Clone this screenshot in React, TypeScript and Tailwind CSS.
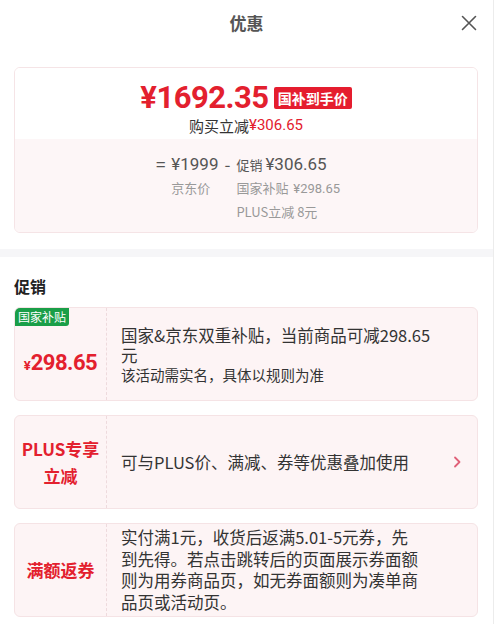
import React from "react";

const CJK = '"Noto Sans CJK SC", "Noto Sans", sans-serif';
const NUM = 'Roboto, "Noto Sans CJK SC", sans-serif';

function Card({ left, children, chevron }: { left: React.ReactNode; children: React.ReactNode; chevron?: boolean }) {
  return (
    <div className="relative flex h-[94px] rounded-[6px] border border-[#f5e3e5] bg-[#fdf4f5] overflow-hidden">
      <div className="relative flex w-[92px] shrink-0 items-center justify-center border-r border-dashed border-[#eedadd]">
        {left}
      </div>
      <div className="flex flex-1 items-center pl-[14px]">{children}</div>
      {chevron && (
        <div className="flex w-[40px] items-center justify-center">
          <svg width="10" height="14" viewBox="0 0 10 14">
            <path d="M3 2.5 L7.5 7 L3 11.5" fill="none" stroke="#e06078" strokeWidth="1.8" strokeLinecap="round" strokeLinejoin="round" />
          </svg>
        </div>
      )}
    </div>
  );
}

export default function App() {
  return (
    <div className="h-[624px] w-[500px] overflow-hidden bg-white" style={{ fontFamily: CJK }}>
      <div className="h-full w-[494px] border-r border-[#ececec]">
        {/* header */}
        <div className="grid h-[46px] grid-cols-[48px_1fr_48px] items-center">
          <div />
          <div className="text-center text-[17px] font-bold text-[#555]">优惠</div>
          <div className="flex items-center justify-center">
            <svg width="16" height="16" viewBox="0 0 16 16">
              <path d="M1.5 1.5 L14.5 14.5 M14.5 1.5 L1.5 14.5" stroke="#555" strokeWidth="1.6" strokeLinecap="round" />
            </svg>
          </div>
        </div>

        {/* top card */}
        <div className="mx-[14px] mt-[21px] w-[464px] overflow-hidden rounded-[6px] border border-[#f5e4e6]">
          <div className="flex flex-col items-center bg-white pt-[11px] pb-[3px]">
            <div className="flex h-[36px] items-center">
              <span className="text-[31px] font-bold leading-none tracking-[-0.5px] text-[#e3202e]" style={{ fontFamily: NUM }}>
                ¥1692.35
              </span>
              <span className="ml-[5px] mt-[2px] rounded-[2px] bg-[#e51d2e] px-[4px] text-[14px] font-bold leading-[22px] text-white">
                国补到手价
              </span>
            </div>
            <div className="flex h-[21px] items-center text-[15px] leading-[21px]">
              <span className="text-[#333]">购买立减</span>
              <span className="text-[#e3202e]" style={{ fontFamily: NUM }}>¥306.65</span>
            </div>
          </div>
          <div className="flex justify-center bg-[#fdf6f7] pt-[13px] pb-[8px] pl-[4px] text-[#555]">
            <span className="text-[17px] leading-[24px]">=</span>
            <div className="ml-[6px] flex flex-col">
              <span className="h-[24px] text-[17px] leading-[24px]" style={{ fontFamily: NUM }}>¥1999</span>
              <span className="h-[24px] text-[13px] leading-[24px] text-[#999]">京东价</span>
            </div>
            <span className="ml-[6px] text-[17px] leading-[24px]">-</span>
            <div className="ml-[6px] flex flex-col">
              <span className="flex h-[24px] items-baseline leading-[24px]">
                <span className="text-[13px]">促销</span>
                <span className="ml-[3px] text-[17px]" style={{ fontFamily: NUM }}>¥306.65</span>
              </span>
              <span className="h-[24px] text-[13px] leading-[24px] text-[#999]">
                国家补贴 <span className="ml-[2px]" style={{ fontFamily: NUM }}>¥298.65</span>
              </span>
              <span className="h-[24px] text-[13px] leading-[24px] text-[#999]">PLUS立减 8元</span>
            </div>
          </div>
        </div>

        {/* gray band */}
        <div className="mt-[16px] h-[8px] bg-[#f6f6f8]" />

        <div className="mx-[14px] mt-[18px] text-[16px] font-bold leading-[22px] text-[#222]">促销</div>

        <div className="mx-[14px] mt-[10px] flex w-[464px] flex-col gap-[14px]">
          <Card
            left={
              <>
                <div className="absolute left-0 top-0 rounded-br-[3px] bg-[#1a9e48] px-[3px] text-[12px] leading-[18px] text-white">
                  国家补贴
                </div>
                <div className="mt-[16px] flex items-baseline text-[#e3202e]" style={{ fontFamily: NUM }}>
                  <span className="text-[13px] font-bold">¥</span>
                  <span className="text-[22px] font-bold tracking-[-0.5px]">298.65</span>
                </div>
              </>
            }
          >
            <div className="w-[316px] text-[#333]">
              <div className="text-[16.5px] leading-[20px]">国家&amp;京东双重补贴，当前商品可减298.65元</div>
              <div className="text-[14.5px] leading-[19px]">该活动需实名，具体以规则为准</div>
            </div>
          </Card>
          <Card
            chevron
            left={
              <div className="text-center text-[17px] font-bold leading-[27px] text-[#e3202e]">
                PLUS专享
                <br />
                立减
              </div>
            }
          >
            <div className="text-[16.5px] text-[#333]">可与PLUS价、满减、券等优惠叠加使用</div>
          </Card>
          <Card
            left={<div className="text-center text-[17px] font-bold text-[#e3202e]">满额返券</div>}
          >
            <div className="w-[300px] text-[16.5px] leading-[21.5px] text-[#333]">
              实付满1元，收货后返满5.01-5元券，先到先得。若点击跳转后的页面展示券面额则为用券商品页，如无券面额则为凑单商品页或活动页。
            </div>
          </Card>
        </div>
      </div>
    </div>
  );
}
